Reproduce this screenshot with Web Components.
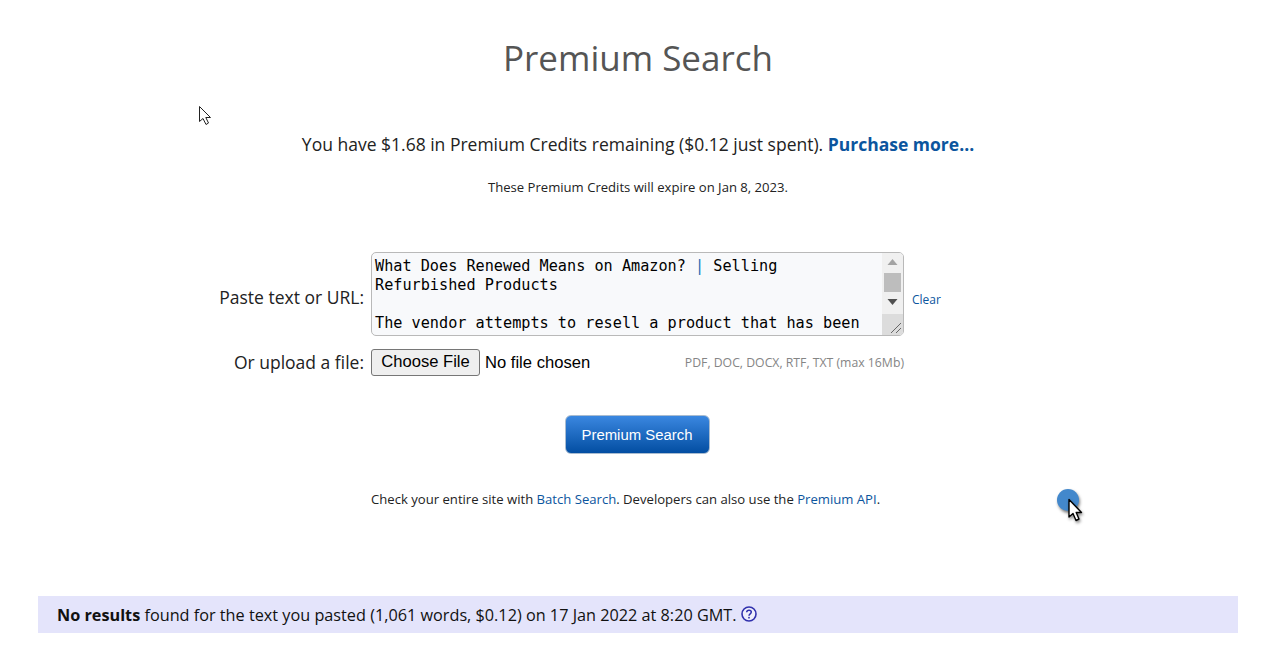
<!DOCTYPE html>
<html lang="en"><head><meta charset="utf-8"><title>Premium Search</title>
<style>
html,body{margin:0;padding:0;background:#fff;height:664px;overflow:hidden}
body{font-family:"Open Sans",sans-serif;color:#111;position:relative}
</style></head><body>
<premium-page></premium-page>
<script>
class ScrollBox extends HTMLElement{constructor(){super();this.attachShadow({mode:'open'}).innerHTML=`
<style>
:host{display:flex;width:533px;height:84px;box-sizing:border-box;border:1px solid #b9b9b9;border-radius:5px;background:#f8f9fb;overflow:hidden}
.txt{flex:1;min-width:0;padding:4px 0 0 3px;font:15.2px/19px "DejaVu Sans Mono",monospace;color:#000;white-space:pre;overflow:hidden}
.bar{width:21px;background:#f0f0f0;display:flex;flex-direction:column;align-items:center;flex:none}
.up{height:17px;display:flex;align-items:center;justify-content:center;margin-top:0}
.thumb{width:17px;height:19px;background:#bdbdbd;margin-top:3px}
.dn{height:17px;display:flex;align-items:center;justify-content:center;margin-top:1px}
.grip{margin-top:auto;width:21px;height:21px;background:#dcdcdc;display:block}
</style>
<div class="txt"><slot></slot></div>
<div class="bar">
<div class="up"><svg width="11" height="6"><path d="M5.5 0L10.5 6H.5z" fill="#a3a3a3"/></svg></div>
<div class="thumb"></div>
<div class="dn"><svg width="11" height="6"><path d="M.5 0h10L5.5 6z" fill="#505050"/></svg></div>
<svg class="grip" viewBox="0 0 21 21"><path d="M9 19L19 9M14 19L19 14" stroke="#666" stroke-width="1" fill="none"/></svg>
</div>`}}
customElements.define('scroll-box',ScrollBox);

class FilePick extends HTMLElement{constructor(){super();this.attachShadow({mode:'open'}).innerHTML=`
<style>
:host{display:flex;align-items:center;font:16.6px "Liberation Sans",Arial,sans-serif;color:#000}
.b{box-sizing:border-box;width:109px;height:27px;border:1px solid #767676;border-radius:3px;background:#efefef;display:flex;align-items:center;justify-content:center;padding-bottom:2px}
.t{margin-left:5px}
</style><span class="b">Choose File</span><span class="t">No file chosen</span>`}}
customElements.define('file-pick',FilePick);

class BlueButton extends HTMLElement{constructor(){super();this.attachShadow({mode:'open'}).innerHTML=`
<style>
:host{display:flex;box-sizing:border-box;width:145px;height:39px;align-items:center;justify-content:center;border-radius:6px;border:1px solid #a9bcd0;
background:linear-gradient(#3a87e0,#034ea2);color:#fff;font:14.9px "Liberation Sans",Arial,sans-serif}
</style><slot></slot>`}}
customElements.define('blue-button',BlueButton);

class StatusBanner extends HTMLElement{constructor(){super();this.attachShadow({mode:'open'}).innerHTML=`
<style>
:host{display:flex;align-items:center;box-sizing:border-box;height:37px;background:#e4e4fb;padding-left:19px;font-size:16.24px;color:#111;white-space:pre}
svg{margin-left:4px;margin-top:-2px}
</style><span><slot></slot></span>
<svg width="16" height="16" viewBox="0 0 16 16"><circle cx="8" cy="8" r="7" fill="#eeeefc" stroke="#3030ad" stroke-width="1.600"/><path d="M5.700 6.300C5.800 4.800 6.800 4.200 8 4.200c1.300 0 2.300.8 2.300 1.900 0 1.800-2.300 1.700-2.300 3.600" fill="none" stroke="#3030ad" stroke-width="1.500"/><circle cx="8" cy="11.700" r=".9" fill="#3030ad"/></svg>`}}
customElements.define('status-banner',StatusBanner);

class CursorMark extends HTMLElement{constructor(){super();const big=this.hasAttribute('big');this.attachShadow({mode:'open'}).innerHTML=big?`
<style>:host{position:absolute;left:1056px;top:488px;width:30px;height:36px}
.c{position:absolute;left:1px;top:1px;width:22px;height:22px;border-radius:50%;background:#4388cc;box-shadow:1px 2px 3px rgba(0,0,0,.5)}
svg{position:absolute;left:11px;top:10px;filter:drop-shadow(1px 2px 1.500px rgba(0,0,0,.45))}</style>
<div class="c"></div><svg width="18" height="26" viewBox="0 0 18 26"><path d="M2 1.500V19L6 15.500L9 22.500L12 21L9.200 14.500H14.500z" fill="#fff" stroke="#000" stroke-width="1.400" stroke-linejoin="round"/></svg>`:`
<style>:host{position:absolute;left:198px;top:105px;width:15px;height:21px}</style>
<svg width="15" height="21" viewBox="0 0 15 21"><path d="M1.500 1.500V16.500L5 13.500L8 19.500L10.500 18L7.800 12.500H12.500z" fill="#fff" stroke="#222" stroke-width="1"/></svg>`}}
customElements.define('cursor-mark',CursorMark);

class PremiumPage extends HTMLElement{constructor(){super();this.attachShadow({mode:'open'}).innerHTML=`
<style>
:host{display:block;box-sizing:border-box;padding:0 32px 0 38px;height:664px}
a{color:#0b559e;text-decoration:none}
h1{margin:0;padding-top:35px;text-align:center;font-weight:400;font-size:35px;line-height:46px;color:#555}
.credits{margin:50px 0 0;text-align:center;font-size:17.5px;line-height:26px;color:#222}
.credits a{font-weight:700}
.exp{margin:22px 0 0;text-align:center;font-size:13.1px;line-height:17px;color:#222}
.form{display:grid;grid-template-columns:326px 533px auto;column-gap:7px;row-gap:13px;margin-top:56px;align-items:center}
.lab{text-align:right;font-size:17.5px;color:#222}
.clear{font-size:12px;margin-left:1px;padding-top:11px}
.filerow{display:flex;justify-content:space-between;align-items:center}
.fmt{font-size:12.25px;color:#858585;white-space:nowrap}
.btn{display:flex;justify-content:center;margin:39px 2px 0 0}
.more{margin:36px 0 0 333px;font-size:13.12px;line-height:18px;color:#222;white-space:nowrap}
.spacer{height:88px}
.ln{display:block;height:19px}
</style>
<h1>Premium Search</h1>
<p class="credits">You have $1.68 in Premium Credits remaining ($0.12 just spent). <a href="#">Purchase more...</a></p>
<p class="exp">These Premium Credits will expire on Jan 8, 2023.</p>
<div class="form">
<div class="lab" style="padding-top:6px">Paste text or URL:</div>
<scroll-box><span class="ln"><span>What Does Renewed Means on Amazon? </span><span style="color:#1a6fb4">|</span><span> Selling</span></span><span class="ln">Refurbished Products</span><span class="ln"></span><span class="ln">The vendor attempts to resell a product that has been</span></scroll-box>
<a class="clear" href="#">Clear</a>
<div class="lab" style="padding-bottom:2px">Or upload a file:</div>
<div class="filerow"><file-pick></file-pick><span class="fmt">PDF, DOC, DOCX, RTF, TXT (max 16Mb)</span></div>
<span></span>
</div>
<div class="btn"><blue-button>Premium Search</blue-button></div>
<p class="more">Check your entire site with <a href="#">Batch Search</a>. Developers can also use the <a href="#">Premium API</a>.</p>
<div class="spacer"></div>
<status-banner><b>No results</b> found for the text you pasted (1,061 words, $0.12) on 17 Jan 2022 at 8:20 GMT.</status-banner>
<cursor-mark></cursor-mark>
<cursor-mark big></cursor-mark>`}}
customElements.define('premium-page',PremiumPage);
</script>
</body></html>
